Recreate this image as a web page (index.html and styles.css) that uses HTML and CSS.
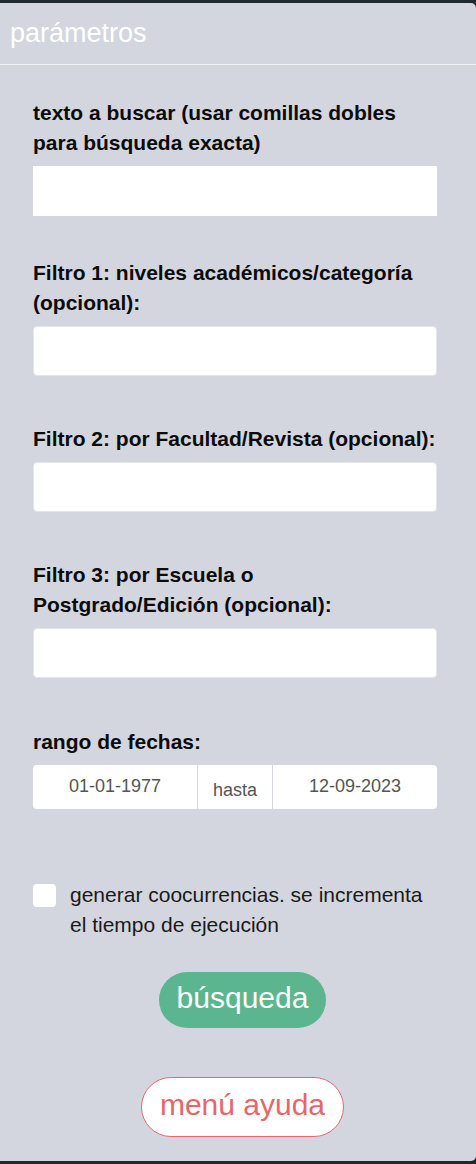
FILE: index.html
```html
<!DOCTYPE html>
<html lang="es">
<head>
<meta charset="utf-8">
<title>parámetros</title>
<link rel="stylesheet" href="styles.css">
</head>
<body>
<div class="panel">
  <div class="panel-header">parámetros</div>
  <form class="panel-body">
    <div class="group group-first">
      <label class="label">texto a buscar (usar comillas dobles para búsqueda exacta)</label>
      <input class="field field-plain" type="text">
    </div>
    <div class="group group-second">
      <label class="label">Filtro 1: niveles académicos/categoría (opcional):</label>
      <input class="field" type="text">
    </div>
    <div class="group">
      <label class="label">Filtro 2: por Facultad/Revista (opcional):</label>
      <input class="field" type="text">
    </div>
    <div class="group">
      <label class="label">Filtro 3: por Escuela o Postgrado/Edición (opcional):</label>
      <input class="field" type="text">
    </div>
    <div class="group group-dates">
      <label class="label">rango de fechas:</label>
      <div class="daterange">
        <div class="date">01-01-1977</div>
        <div class="sep">hasta</div>
        <div class="date">12-09-2023</div>
      </div>
    </div>
    <div class="check-row">
      <span class="checkbox"></span>
      <span class="check-text">generar coocurrencias. se incrementa el tiempo de ejecución</span>
    </div>
    <div class="actions">
      <button type="button" class="btn btn-search">búsqueda</button>
      <button type="button" class="btn btn-help">menú ayuda</button>
    </div>
  </form>
</div>
</body>
</html>
```
FILE: styles.css
```css
html, body {
  margin: 0;
  padding: 0;
}
body {
  background: #212930;
  font-family: "Liberation Sans", Arial, Helvetica, sans-serif;
  height: 1164px;
  padding-top: 3px;
  box-sizing: border-box;
}
.panel {
  background: #d3d6de;
  height: 1158px;
  border-radius: 0 5px 5px 0;
  overflow: hidden;
}
.panel-header {
  height: 61px;
  line-height: 61px;
  padding-left: 10px;
  color: #ffffff;
  font-size: 27px;
  border-bottom: 1px solid #f2f3f6;
}
.panel-body {
  padding: 0 39px 0 33px;
  display: flex;
  flex-direction: column;
}
.group {
  display: flex;
  flex-direction: column;
  margin-top: 48px;
}
.group-first {
  margin-top: 33px;
}
.group-second {
  margin-top: 42px;
}
.group-dates {
  margin-top: 49px;
}
.label {
  font-weight: bold;
  font-size: 21px;
  line-height: 30px;
  color: #0c0c0c;
  margin-bottom: 8px;
}
.field {
  height: 50px;
  box-sizing: border-box;
  border: 1px solid #e3e5ea;
  border-radius: 4px;
  background: #ffffff;
  margin: 0;
  padding: 0 12px;
  font-size: 18px;
}
.field-plain {
  border: none;
  border-radius: 0;
}
.daterange {
  display: flex;
  height: 44px;
  background: #ffffff;
  border-radius: 4px;
  overflow: hidden;
  font-size: 18px;
  color: #555555;
}
.date {
  flex: 1;
  display: flex;
  align-items: center;
  justify-content: center;
  padding-bottom: 2px;
}
.sep {
  width: 74px;
  display: flex;
  align-items: center;
  justify-content: center;
  border-left: 1px solid #d3d6de;
  border-right: 1px solid #d3d6de;
  padding-top: 6px;
}
.check-row {
  display: flex;
  align-items: flex-start;
  margin-top: 71px;
}
.checkbox {
  flex: none;
  width: 23px;
  height: 23px;
  background: #ffffff;
  border-radius: 4px;
  margin-top: 4px;
  margin-right: 14px;
}
.check-text {
  font-size: 21px;
  line-height: 30px;
  color: #1a1a1a;
}
.actions {
  display: flex;
  flex-direction: column;
  align-items: center;
  margin: 0 -39px 0 -24px;
}
.btn {
  font-family: "Liberation Sans", Arial, Helvetica, sans-serif;
  font-size: 30px;
  border-radius: 30px;
  cursor: pointer;
}
.btn-search {
  margin-top: 32px;
  height: 56px;
  padding: 0 18px 4px;
  background: #5bb68f;
  border: none;
  color: #ffffff;
}
.btn-help {
  margin-top: 49px;
  height: 60px;
  padding: 0 18px 4px;
  background: #ffffff;
  border: 1px solid #e8686c;
  color: #e8656a;
}
```
